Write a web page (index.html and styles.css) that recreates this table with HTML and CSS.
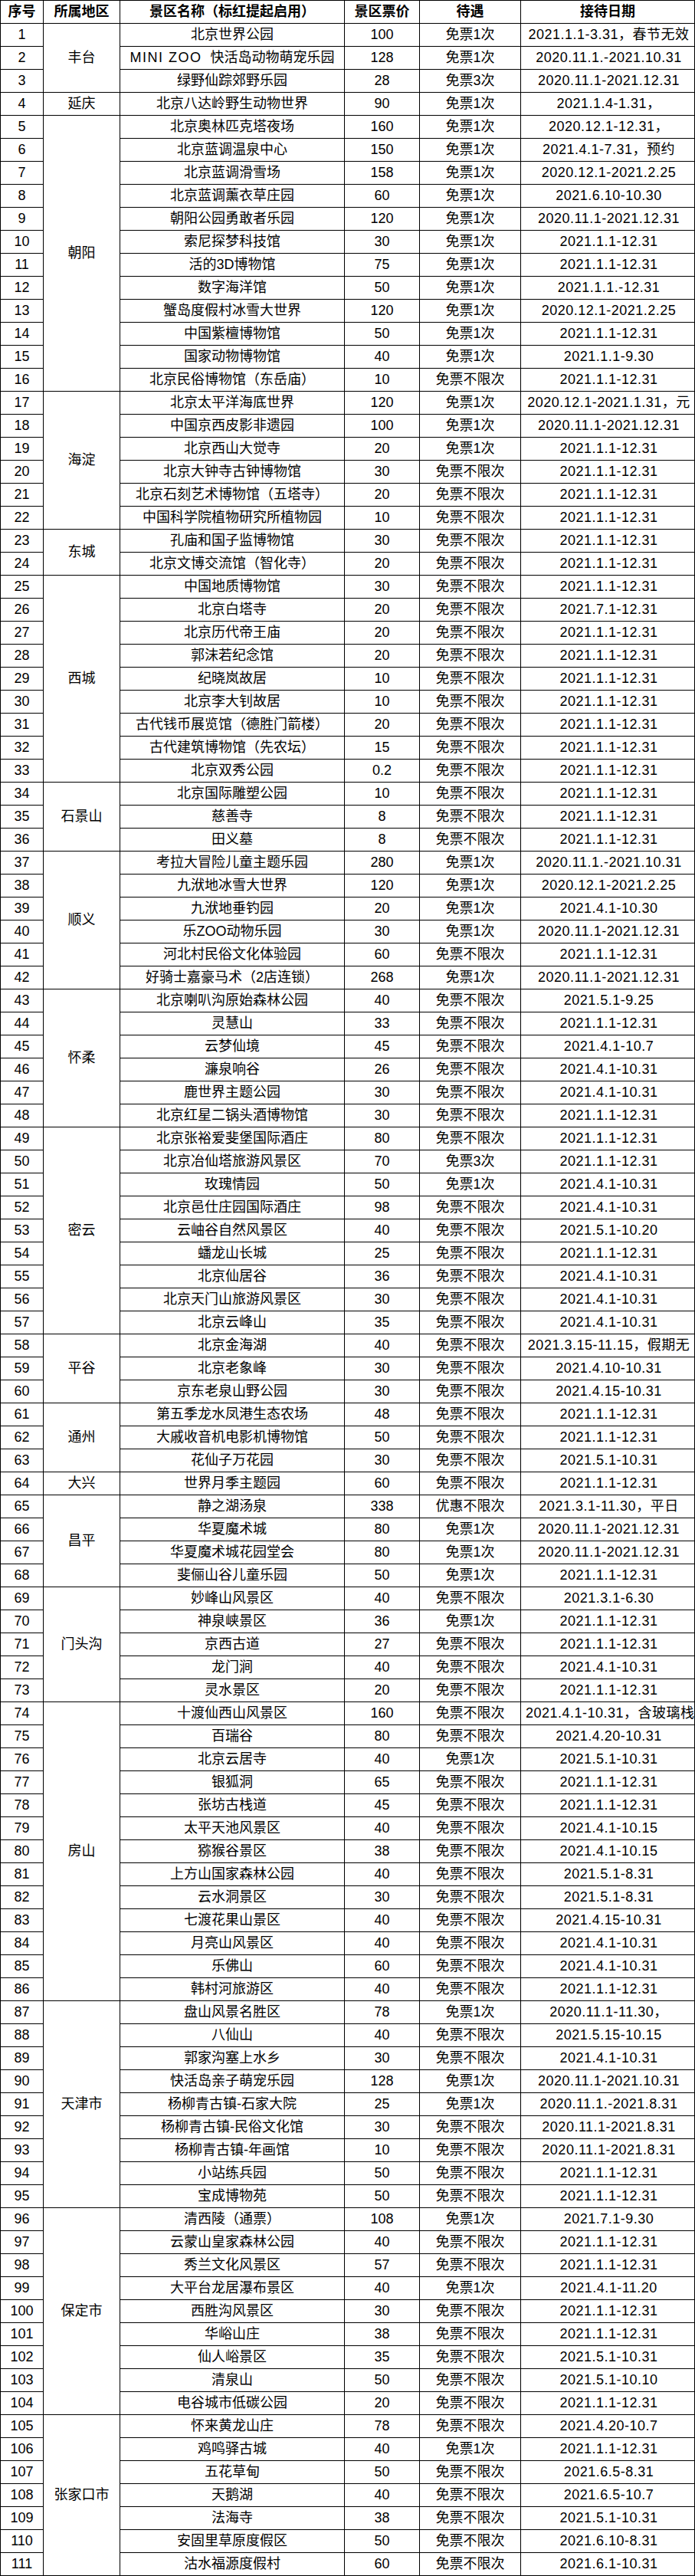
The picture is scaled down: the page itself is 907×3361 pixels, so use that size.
FILE: index.html
```html
<!DOCTYPE html>
<html lang="zh-CN">
<head>
<meta charset="utf-8">
<title>景区接待表</title>
<link rel="stylesheet" href="styles.css">
</head>
<body>
<div class="sheet">
<div class="c h">序号</div><div class="c h">所属地区</div><div class="c h">景区名称（标红提起启用）</div><div class="c h">景区票价</div><div class="c h">待遇</div><div class="c h">接待日期</div>

<div class="c">1</div><div class="c a s3">丰台</div><div class="c">北京世界公园</div><div class="c">100</div><div class="c">免票1次</div><div class="c d">2021.1.1-3.31，春节无效</div>
<div class="c">2</div><div class="c"><span class="lat">MINI ZOO</span> 快活岛动物萌宠乐园</div><div class="c">128</div><div class="c">免票1次</div><div class="c d">2020.11.1.-2021.10.31</div>
<div class="c">3</div><div class="c">绿野仙踪郊野乐园</div><div class="c">28</div><div class="c">免票3次</div><div class="c d">2020.11.1-2021.12.31</div>
<div class="c">4</div><div class="c a">延庆</div><div class="c">北京八达岭野生动物世界</div><div class="c">90</div><div class="c">免票1次</div><div class="c d">2021.1.4-1.31，</div>
<div class="c">5</div><div class="c a s12">朝阳</div><div class="c">北京奥林匹克塔夜场</div><div class="c">160</div><div class="c">免票1次</div><div class="c d">2020.12.1-12.31，</div>
<div class="c">6</div><div class="c">北京蓝调温泉中心</div><div class="c">150</div><div class="c">免票1次</div><div class="c d">2021.4.1-7.31，预约</div>
<div class="c">7</div><div class="c">北京蓝调滑雪场</div><div class="c">158</div><div class="c">免票1次</div><div class="c d">2020.12.1-2021.2.25</div>
<div class="c">8</div><div class="c">北京蓝调薰衣草庄园</div><div class="c">60</div><div class="c">免票1次</div><div class="c d">2021.6.10-10.30</div>
<div class="c">9</div><div class="c">朝阳公园勇敢者乐园</div><div class="c">120</div><div class="c">免票1次</div><div class="c d">2020.11.1-2021.12.31</div>
<div class="c">10</div><div class="c">索尼探梦科技馆</div><div class="c">30</div><div class="c">免票1次</div><div class="c d">2021.1.1-12.31</div>
<div class="c">11</div><div class="c">活的3D博物馆</div><div class="c">75</div><div class="c">免票1次</div><div class="c d">2021.1.1-12.31</div>
<div class="c">12</div><div class="c">数字海洋馆</div><div class="c">50</div><div class="c">免票1次</div><div class="c d">2021.1.1.-12.31</div>
<div class="c">13</div><div class="c">蟹岛度假村冰雪大世界</div><div class="c">120</div><div class="c">免票1次</div><div class="c d">2020.12.1-2021.2.25</div>
<div class="c">14</div><div class="c">中国紫檀博物馆</div><div class="c">50</div><div class="c">免票1次</div><div class="c d">2021.1.1-12.31</div>
<div class="c">15</div><div class="c">国家动物博物馆</div><div class="c">40</div><div class="c">免票1次</div><div class="c d">2021.1.1-9.30</div>
<div class="c">16</div><div class="c">北京民俗博物馆（东岳庙）</div><div class="c">10</div><div class="c">免票不限次</div><div class="c d">2021.1.1-12.31</div>
<div class="c">17</div><div class="c a s6">海淀</div><div class="c">北京太平洋海底世界</div><div class="c">120</div><div class="c">免票1次</div><div class="c d">2020.12.1-2021.1.31，元</div>
<div class="c">18</div><div class="c">中国京西皮影非遗园</div><div class="c">100</div><div class="c">免票1次</div><div class="c d">2020.11.1-2021.12.31</div>
<div class="c">19</div><div class="c">北京西山大觉寺</div><div class="c">20</div><div class="c">免票1次</div><div class="c d">2021.1.1-12.31</div>
<div class="c">20</div><div class="c">北京大钟寺古钟博物馆</div><div class="c">30</div><div class="c">免票不限次</div><div class="c d">2021.1.1-12.31</div>
<div class="c">21</div><div class="c">北京石刻艺术博物馆（五塔寺）</div><div class="c">20</div><div class="c">免票不限次</div><div class="c d">2021.1.1-12.31</div>
<div class="c">22</div><div class="c">中国科学院植物研究所植物园</div><div class="c">10</div><div class="c">免票不限次</div><div class="c d">2021.1.1-12.31</div>
<div class="c">23</div><div class="c a s2">东城</div><div class="c">孔庙和国子监博物馆</div><div class="c">30</div><div class="c">免票不限次</div><div class="c d">2021.1.1-12.31</div>
<div class="c">24</div><div class="c">北京文博交流馆（智化寺）</div><div class="c">20</div><div class="c">免票不限次</div><div class="c d">2021.1.1-12.31</div>
<div class="c">25</div><div class="c a s9">西城</div><div class="c">中国地质博物馆</div><div class="c">30</div><div class="c">免票不限次</div><div class="c d">2021.1.1-12.31</div>
<div class="c">26</div><div class="c">北京白塔寺</div><div class="c">20</div><div class="c">免票不限次</div><div class="c d">2021.7.1-12.31</div>
<div class="c">27</div><div class="c">北京历代帝王庙</div><div class="c">20</div><div class="c">免票不限次</div><div class="c d">2021.1.1-12.31</div>
<div class="c">28</div><div class="c">郭沫若纪念馆</div><div class="c">20</div><div class="c">免票不限次</div><div class="c d">2021.1.1-12.31</div>
<div class="c">29</div><div class="c">纪晓岚故居</div><div class="c">10</div><div class="c">免票不限次</div><div class="c d">2021.1.1-12.31</div>
<div class="c">30</div><div class="c">北京李大钊故居</div><div class="c">10</div><div class="c">免票不限次</div><div class="c d">2021.1.1-12.31</div>
<div class="c">31</div><div class="c">古代钱币展览馆（德胜门箭楼）</div><div class="c">20</div><div class="c">免票不限次</div><div class="c d">2021.1.1-12.31</div>
<div class="c">32</div><div class="c">古代建筑博物馆（先农坛）</div><div class="c">15</div><div class="c">免票不限次</div><div class="c d">2021.1.1-12.31</div>
<div class="c">33</div><div class="c">北京双秀公园</div><div class="c">0.2</div><div class="c">免票不限次</div><div class="c d">2021.1.1-12.31</div>
<div class="c">34</div><div class="c a s3">石景山</div><div class="c">北京国际雕塑公园</div><div class="c">10</div><div class="c">免票不限次</div><div class="c d">2021.1.1-12.31</div>
<div class="c">35</div><div class="c">慈善寺</div><div class="c">8</div><div class="c">免票不限次</div><div class="c d">2021.1.1-12.31</div>
<div class="c">36</div><div class="c">田义墓</div><div class="c">8</div><div class="c">免票不限次</div><div class="c d">2021.1.1-12.31</div>
<div class="c">37</div><div class="c a s6">顺义</div><div class="c">考拉大冒险儿童主题乐园</div><div class="c">280</div><div class="c">免票1次</div><div class="c d">2020.11.1.-2021.10.31</div>
<div class="c">38</div><div class="c">九洑地冰雪大世界</div><div class="c">120</div><div class="c">免票1次</div><div class="c d">2020.12.1-2021.2.25</div>
<div class="c">39</div><div class="c">九洑地垂钓园</div><div class="c">20</div><div class="c">免票1次</div><div class="c d">2021.4.1-10.30</div>
<div class="c">40</div><div class="c">乐ZOO动物乐园</div><div class="c">30</div><div class="c">免票1次</div><div class="c d">2020.11.1-2021.12.31</div>
<div class="c">41</div><div class="c">河北村民俗文化体验园</div><div class="c">60</div><div class="c">免票不限次</div><div class="c d">2021.1.1-12.31</div>
<div class="c">42</div><div class="c">好骑士嘉豪马术（2店连锁）</div><div class="c">268</div><div class="c">免票1次</div><div class="c d">2020.11.1-2021.12.31</div>
<div class="c">43</div><div class="c a s6">怀柔</div><div class="c">北京喇叭沟原始森林公园</div><div class="c">40</div><div class="c">免票不限次</div><div class="c d">2021.5.1-9.25</div>
<div class="c">44</div><div class="c">灵慧山</div><div class="c">33</div><div class="c">免票不限次</div><div class="c d">2021.1.1-12.31</div>
<div class="c">45</div><div class="c">云梦仙境</div><div class="c">45</div><div class="c">免票不限次</div><div class="c d">2021.4.1-10.7</div>
<div class="c">46</div><div class="c">濂泉响谷</div><div class="c">26</div><div class="c">免票不限次</div><div class="c d">2021.4.1-10.31</div>
<div class="c">47</div><div class="c">鹿世界主题公园</div><div class="c">30</div><div class="c">免票不限次</div><div class="c d">2021.4.1-10.31</div>
<div class="c">48</div><div class="c">北京红星二锅头酒博物馆</div><div class="c">30</div><div class="c">免票不限次</div><div class="c d">2021.1.1-12.31</div>
<div class="c">49</div><div class="c a s9">密云</div><div class="c">北京张裕爱斐堡国际酒庄</div><div class="c">80</div><div class="c">免票不限次</div><div class="c d">2021.1.1-12.31</div>
<div class="c">50</div><div class="c">北京冶仙塔旅游风景区</div><div class="c">70</div><div class="c">免票3次</div><div class="c d">2021.1.1-12.31</div>
<div class="c">51</div><div class="c">玫瑰情园</div><div class="c">50</div><div class="c">免票1次</div><div class="c d">2021.4.1-10.31</div>
<div class="c">52</div><div class="c">北京邑仕庄园国际酒庄</div><div class="c">98</div><div class="c">免票不限次</div><div class="c d">2021.4.1-10.31</div>
<div class="c">53</div><div class="c">云岫谷自然风景区</div><div class="c">40</div><div class="c">免票不限次</div><div class="c d">2021.5.1-10.20</div>
<div class="c">54</div><div class="c">蟠龙山长城</div><div class="c">25</div><div class="c">免票不限次</div><div class="c d">2021.1.1-12.31</div>
<div class="c">55</div><div class="c">北京仙居谷</div><div class="c">36</div><div class="c">免票不限次</div><div class="c d">2021.4.1-10.31</div>
<div class="c">56</div><div class="c">北京天门山旅游风景区</div><div class="c">30</div><div class="c">免票不限次</div><div class="c d">2021.4.1-10.31</div>
<div class="c">57</div><div class="c">北京云峰山</div><div class="c">35</div><div class="c">免票不限次</div><div class="c d">2021.4.1-10.31</div>
<div class="c">58</div><div class="c a s3">平谷</div><div class="c">北京金海湖</div><div class="c">40</div><div class="c">免票不限次</div><div class="c d">2021.3.15-11.15，假期无</div>
<div class="c">59</div><div class="c">北京老象峰</div><div class="c">30</div><div class="c">免票不限次</div><div class="c d">2021.4.10-10.31</div>
<div class="c">60</div><div class="c">京东老泉山野公园</div><div class="c">30</div><div class="c">免票不限次</div><div class="c d">2021.4.15-10.31</div>
<div class="c">61</div><div class="c a s3">通州</div><div class="c">第五季龙水凤港生态农场</div><div class="c">48</div><div class="c">免票不限次</div><div class="c d">2021.1.1-12.31</div>
<div class="c">62</div><div class="c">大戚收音机电影机博物馆</div><div class="c">50</div><div class="c">免票不限次</div><div class="c d">2021.1.1-12.31</div>
<div class="c">63</div><div class="c">花仙子万花园</div><div class="c">30</div><div class="c">免票不限次</div><div class="c d">2021.5.1-10.31</div>
<div class="c">64</div><div class="c a">大兴</div><div class="c">世界月季主题园</div><div class="c">60</div><div class="c">免票不限次</div><div class="c d">2021.1.1-12.31</div>
<div class="c">65</div><div class="c a s4">昌平</div><div class="c">静之湖汤泉</div><div class="c">338</div><div class="c">优惠不限次</div><div class="c d">2021.3.1-11.30，平日</div>
<div class="c">66</div><div class="c">华夏魔术城</div><div class="c">80</div><div class="c">免票1次</div><div class="c d">2020.11.1-2021.12.31</div>
<div class="c">67</div><div class="c">华夏魔术城花园堂会</div><div class="c">80</div><div class="c">免票1次</div><div class="c d">2020.11.1-2021.12.31</div>
<div class="c">68</div><div class="c">斐俪山谷儿童乐园</div><div class="c">50</div><div class="c">免票1次</div><div class="c d">2021.1.1-12.31</div>
<div class="c">69</div><div class="c a s5">门头沟</div><div class="c">妙峰山风景区</div><div class="c">40</div><div class="c">免票不限次</div><div class="c d">2021.3.1-6.30</div>
<div class="c">70</div><div class="c">神泉峡景区</div><div class="c">36</div><div class="c">免票1次</div><div class="c d">2021.1.1-12.31</div>
<div class="c">71</div><div class="c">京西古道</div><div class="c">27</div><div class="c">免票不限次</div><div class="c d">2021.1.1-12.31</div>
<div class="c">72</div><div class="c">龙门涧</div><div class="c">40</div><div class="c">免票不限次</div><div class="c d">2021.4.1-10.31</div>
<div class="c">73</div><div class="c">灵水景区</div><div class="c">20</div><div class="c">免票不限次</div><div class="c d">2021.1.1-12.31</div>
<div class="c">74</div><div class="c a s13">房山</div><div class="c">十渡仙西山风景区</div><div class="c">160</div><div class="c">免票不限次</div><div class="c d">2021.4.1-10.31，含玻璃栈</div>
<div class="c">75</div><div class="c">百瑞谷</div><div class="c">80</div><div class="c">免票不限次</div><div class="c d">2021.4.20-10.31</div>
<div class="c">76</div><div class="c">北京云居寺</div><div class="c">40</div><div class="c">免票1次</div><div class="c d">2021.5.1-10.31</div>
<div class="c">77</div><div class="c">银狐洞</div><div class="c">65</div><div class="c">免票不限次</div><div class="c d">2021.1.1-12.31</div>
<div class="c">78</div><div class="c">张坊古栈道</div><div class="c">45</div><div class="c">免票不限次</div><div class="c d">2021.1.1-12.31</div>
<div class="c">79</div><div class="c">太平天池风景区</div><div class="c">40</div><div class="c">免票不限次</div><div class="c d">2021.4.1-10.15</div>
<div class="c">80</div><div class="c">猕猴谷景区</div><div class="c">38</div><div class="c">免票不限次</div><div class="c d">2021.4.1-10.15</div>
<div class="c">81</div><div class="c">上方山国家森林公园</div><div class="c">40</div><div class="c">免票不限次</div><div class="c d">2021.5.1-8.31</div>
<div class="c">82</div><div class="c">云水洞景区</div><div class="c">30</div><div class="c">免票不限次</div><div class="c d">2021.5.1-8.31</div>
<div class="c">83</div><div class="c">七渡花果山景区</div><div class="c">40</div><div class="c">免票不限次</div><div class="c d">2021.4.15-10.31</div>
<div class="c">84</div><div class="c">月亮山风景区</div><div class="c">40</div><div class="c">免票不限次</div><div class="c d">2021.4.1-10.31</div>
<div class="c">85</div><div class="c">乐佛山</div><div class="c">60</div><div class="c">免票不限次</div><div class="c d">2021.4.1-10.31</div>
<div class="c">86</div><div class="c">韩村河旅游区</div><div class="c">40</div><div class="c">免票不限次</div><div class="c d">2021.1.1-12.31</div>
<div class="c">87</div><div class="c a s9">天津市</div><div class="c">盘山风景名胜区</div><div class="c">78</div><div class="c">免票1次</div><div class="c d">2020.11.1-11.30，</div>
<div class="c">88</div><div class="c">八仙山</div><div class="c">40</div><div class="c">免票不限次</div><div class="c d">2021.5.15-10.15</div>
<div class="c">89</div><div class="c">郭家沟塞上水乡</div><div class="c">30</div><div class="c">免票不限次</div><div class="c d">2021.4.1-10.31</div>
<div class="c">90</div><div class="c">快活岛亲子萌宠乐园</div><div class="c">128</div><div class="c">免票1次</div><div class="c d">2020.11.1-2021.10.31</div>
<div class="c">91</div><div class="c">杨柳青古镇-石家大院</div><div class="c">25</div><div class="c">免票1次</div><div class="c d">2020.11.1.-2021.8.31</div>
<div class="c">92</div><div class="c">杨柳青古镇-民俗文化馆</div><div class="c">30</div><div class="c">免票不限次</div><div class="c d">2020.11.1-2021.8.31</div>
<div class="c">93</div><div class="c">杨柳青古镇-年画馆</div><div class="c">10</div><div class="c">免票不限次</div><div class="c d">2020.11.1-2021.8.31</div>
<div class="c">94</div><div class="c">小站练兵园</div><div class="c">50</div><div class="c">免票不限次</div><div class="c d">2021.1.1-12.31</div>
<div class="c">95</div><div class="c">宝成博物苑</div><div class="c">50</div><div class="c">免票不限次</div><div class="c d">2021.1.1-12.31</div>
<div class="c">96</div><div class="c a s9">保定市</div><div class="c">清西陵（通票）</div><div class="c">108</div><div class="c">免票1次</div><div class="c d">2021.7.1-9.30</div>
<div class="c">97</div><div class="c">云蒙山皇家森林公园</div><div class="c">40</div><div class="c">免票不限次</div><div class="c d">2021.1.1-12.31</div>
<div class="c">98</div><div class="c">秀兰文化风景区</div><div class="c">57</div><div class="c">免票不限次</div><div class="c d">2021.1.1-12.31</div>
<div class="c">99</div><div class="c">大平台龙居瀑布景区</div><div class="c">40</div><div class="c">免票1次</div><div class="c d">2021.4.1-11.20</div>
<div class="c">100</div><div class="c">西胜沟风景区</div><div class="c">30</div><div class="c">免票不限次</div><div class="c d">2021.1.1-12.31</div>
<div class="c">101</div><div class="c">华峪山庄</div><div class="c">38</div><div class="c">免票不限次</div><div class="c d">2021.1.1-12.31</div>
<div class="c">102</div><div class="c">仙人峪景区</div><div class="c">35</div><div class="c">免票不限次</div><div class="c d">2021.5.1-10.31</div>
<div class="c">103</div><div class="c">清泉山</div><div class="c">50</div><div class="c">免票不限次</div><div class="c d">2021.5.1-10.10</div>
<div class="c">104</div><div class="c">电谷城市低碳公园</div><div class="c">20</div><div class="c">免票不限次</div><div class="c d">2021.1.1-12.31</div>
<div class="c">105</div><div class="c a s7">张家口市</div><div class="c">怀来黄龙山庄</div><div class="c">78</div><div class="c">免票不限次</div><div class="c d">2021.4.20-10.7</div>
<div class="c">106</div><div class="c">鸡鸣驿古城</div><div class="c">40</div><div class="c">免票1次</div><div class="c d">2021.1.1-12.31</div>
<div class="c">107</div><div class="c">五花草甸</div><div class="c">50</div><div class="c">免票不限次</div><div class="c d">2021.6.5-8.31</div>
<div class="c">108</div><div class="c">天鹅湖</div><div class="c">40</div><div class="c">免票不限次</div><div class="c d">2021.6.5-10.7</div>
<div class="c">109</div><div class="c">法海寺</div><div class="c">38</div><div class="c">免票不限次</div><div class="c d">2021.5.1-10.31</div>
<div class="c">110</div><div class="c">安固里草原度假区</div><div class="c">50</div><div class="c">免票不限次</div><div class="c d">2021.6.10-8.31</div>
<div class="c">111</div><div class="c">沽水福源度假村</div><div class="c">60</div><div class="c">免票不限次</div><div class="c d">2021.6.1-10.31</div>
</div>
</body>
</html>
```

FILE: styles.css
```css
html, body {
  margin: 0;
  padding: 0;
  background: #ffffff;
}

.sheet {
  display: grid;
  grid-template-columns: 56px 100px 293px 98px 132px 227px;
  grid-auto-rows: 30px;
  width: 906px;
  border-top: 1px solid #000;
  border-left: 1px solid #000;
  font-family: "Liberation Sans", "Noto Sans CJK SC", sans-serif;
  font-size: 18px;
  color: #000;
}

.c {
  box-sizing: border-box;
  border-right: 1px solid #000;
  border-bottom: 1px solid #000;
  line-height: 29px;
  text-align: center;
  white-space: nowrap;
  overflow: hidden;
  min-width: 0;
}

.h {
  font-weight: bold;
}

.d {
  padding: 0 3px 0 6px;
  letter-spacing: 0.5px;
}

.lat {
  letter-spacing: 1.5px;
  margin-right: 6px;
}

.a {
  display: flex;
  align-items: center;
  justify-content: center;
}

.s2 { grid-row: span 2; }
.s3 { grid-row: span 3; }
.s4 { grid-row: span 4; }
.s5 { grid-row: span 5; }
.s6 { grid-row: span 6; }
.s7 { grid-row: span 7; }
.s9 { grid-row: span 9; }
.s12 { grid-row: span 12; }
.s13 { grid-row: span 13; }
```
